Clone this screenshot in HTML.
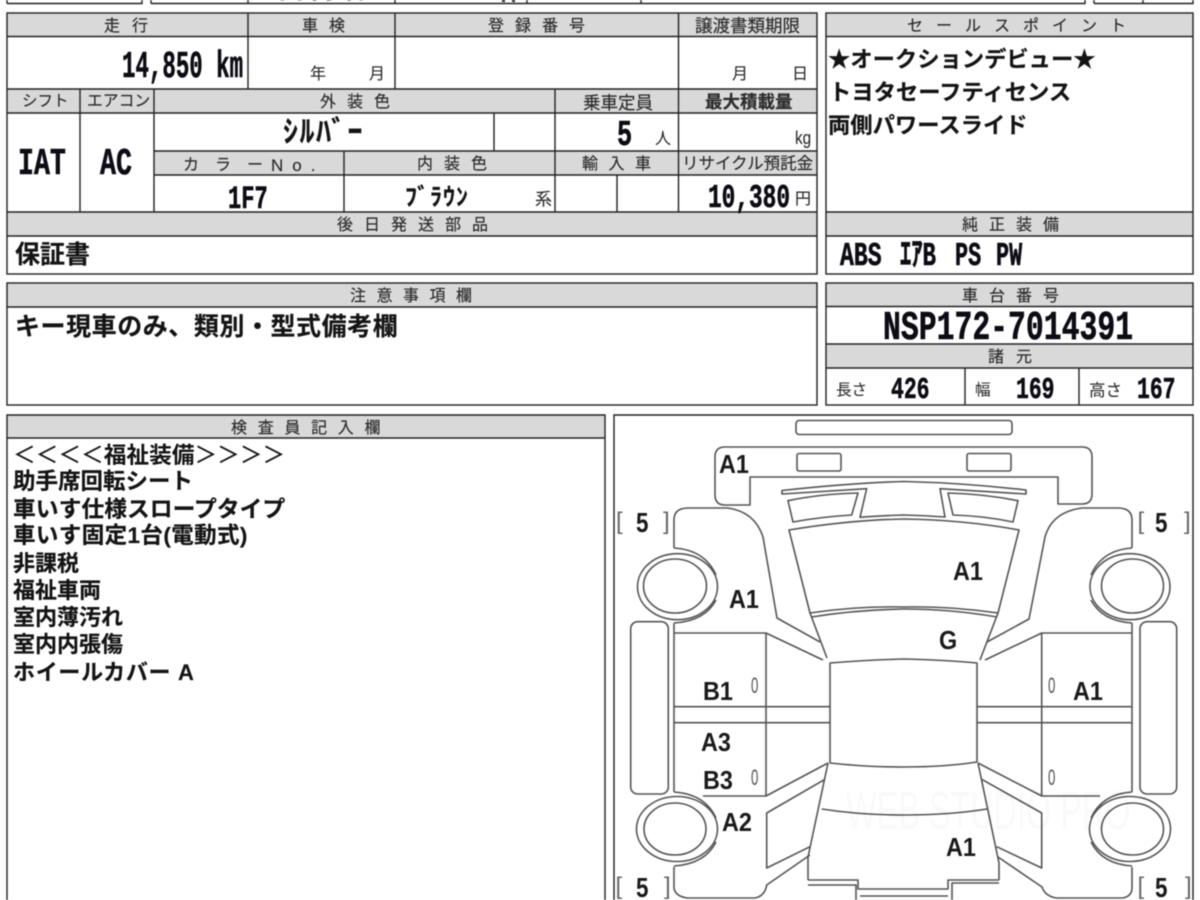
<!DOCTYPE html>
<html lang="ja">
<head>
<meta charset="utf-8">
<title>車両情報</title>
<style>
html,body{margin:0;padding:0;background:#fff;}
#p{position:relative;width:1200px;height:900px;overflow:hidden;background:#fff;filter:blur(.4px);}
svg{position:absolute;left:0;top:0;}
.t{position:absolute;line-height:1;white-space:nowrap;transform-origin:0 0;color:#111;font-family:"Liberation Sans","Noto Sans CJK JP",sans-serif;}
.h{font-size:16px;color:#2c2c2c;margin-top:2px;-webkit-text-stroke:.15px #2c2c2c;}
.s{font-size:16px;color:#2c2c2c;-webkit-text-stroke:.1px #2c2c2c;}
.m{font-family:"Liberation Mono","Noto Sans CJK JP",monospace;font-weight:700;color:#0c0c14;-webkit-text-stroke:.6px #0c0c14;}
.b{font-weight:700;color:#141414;-webkit-text-stroke:.2px #141414;}
.l{font-weight:700;font-size:26px;transform:scaleX(.9);color:#1a1a1a;}
.z{font-size:22px;transform:scaleX(.6);color:#555;}
.k{font-size:24px;color:#666;}
.f{font-weight:700;font-size:28px;transform:scaleX(.8);color:#1a1a1a;}
</style>
</head>
<body>
<div id="p">
<svg width="1200" height="900" viewBox="0 0 1200 900">
  <g fill="#d9d9d9">
    <rect x="7" y="13" width="810" height="24"/>
    <rect x="7" y="89" width="810" height="24"/>
    <rect x="154" y="151" width="663" height="24"/>
    <rect x="7" y="212" width="810" height="24"/>
    <rect x="826" y="13" width="367" height="24"/>
    <rect x="826" y="212" width="367" height="24"/>
    <rect x="7" y="283" width="810" height="24"/>
    <rect x="826" y="283" width="367" height="24"/>
    <rect x="826" y="344" width="367" height="24"/>
    <rect x="7" y="415" width="598" height="23"/>
  </g>
  <g fill="none" stroke="#222" stroke-width="1.4">
    <path d="M7 3.500H142V-2M7 3.500V-2M151 3.500H1085V-2M151 3.500V-2M248 3.500V-2M395 3.500V-2M527 3.500V-2M641 3.500V-2M1094 3.500H1193V-2M1094 3.500V-2M1143 3.500V-2"/>
    <rect x="7" y="13" width="810" height="261"/>
    <path d="M7 36.500H817M7 89H817M7 113H817M154 151H817M154 175H817M7 212H817M7 236H817"/>
    <path d="M248 13V89M395 13V89M678.500 13V212M80 89V212M154 89V212M555 89V212M494 113V151M344 151V212M617 175V212"/>
    <rect x="826" y="13" width="367" height="261"/>
    <path d="M826 36.500H1193M826 212H1193M826 236H1193"/>
    <rect x="7" y="283" width="810" height="122"/>
    <path d="M7 307H817"/>
    <rect x="826" y="283" width="367" height="122"/>
    <path d="M826 306.500H1193M826 344H1193M826 368H1193M965 368V405M1079 368V405"/>
    <path d="M7 905V415H605V905M7 438H605"/>
    <path d="M614 905V415H1193V905"/>
  </g>
  <path d="M502 0h3v2h-3zM512 0h3v2h-3z" fill="#222"/>
  <g fill="none" stroke="#555" stroke-width="1.600" stroke-linejoin="round">
    <rect x="796" y="420.500" width="216" height="14" rx="3"/>
    <path d="M725 447H1082Q1092 447 1092 457V494Q1092 504 1082 504H1058V477H750V505H725Q715 505 715 495V457Q715 447 725 447Z"/>
    <rect x="797" y="453.500" width="44" height="17.500" rx="2"/>
    <rect x="967" y="453.500" width="44" height="17.500" rx="2"/>
    <path d="M782 490.500Q850 483 904 481.500Q965 483 1026 490V494L940 488.700L945 517Q925 515.500 904 515Q885 515.500 860 517.300L866.700 488.700L782 494Z"/>
    <path d="M788 500.700Q820 494 858 493L851.700 515Q820 517 793 522Z"/>
    <path d="M948 493Q985 494 1018 500.700L1013 522Q985 516 953 515Z"/>
    <path d="M789 530Q850 520 904 519Q965 520 1019 530L998 613Q950 606 904 607Q855 606 810 613Z"/>
    <path d="M811.700 617Q855 610 904 609Q950 609 997 617"/>
    <path d="M810 613L827 658M998 613L980 660"/>
    <path d="M830 663Q865 660 904 659Q945 660 977 663V762Q945 767 904 767Q865 767 830 763Z"/>
    <path d="M674 706.700H830M674 722.700H830M977 706.700H1132M977 722.700H1132"/>
    <path d="M766 633V796M1041.700 633V796"/>
    <path d="M674 623V792"/>
    <path d="M1132 623V792"/>
    <path d="M674 633H766L823 660M1132 633H1041.700L985 660"/>
    <path d="M703 796H766L828 763M1100 796H1041.700L978 763"/>
    <path d="M674 548V520Q674 508 688 508H728Q755 512 763 537L777 618L820 642"/>
    <path d="M1132 548V520Q1132 508 1118 508H1082Q1052 512 1045 537L1029 619L987 642"/>
    <path d="M674 548Q705 550 716 575M674 623Q705 621 716 600"/>
    <path d="M1132 548Q1102 550 1091 575M1132 623Q1102 621 1091 600"/>
    <ellipse cx="677.500" cy="586.700" rx="40" ry="33"/>
    <ellipse cx="675" cy="586" rx="31.500" ry="27"/>
    <ellipse cx="1130" cy="586.700" rx="40" ry="33"/>
    <ellipse cx="1132.500" cy="586" rx="31" ry="27"/>
    <path d="M674 792Q705 794 716 818M674 866Q705 864 716 842"/>
    <path d="M1132 792Q1102 794 1091 818M1132 866Q1102 864 1091 842"/>
    <ellipse cx="677" cy="829" rx="40.500" ry="32.500"/>
    <ellipse cx="675" cy="829" rx="31" ry="26"/>
    <ellipse cx="1130" cy="829" rx="40.500" ry="32.500"/>
    <ellipse cx="1132.500" cy="829" rx="31" ry="26"/>
    <rect x="630.700" y="621.700" width="37.600" height="172.300" rx="7"/>
    <rect x="1140" y="621.700" width="36.700" height="172.300" rx="7"/>
    <path d="M825 779.300L766.700 813V868L810 846.700"/>
    <path d="M981.700 779.300L1041.700 813V868L996.700 846.700"/>
    <path d="M828 763L808 857V880M978 763L999 863V880"/>
    <path d="M821.700 809Q860 815 904 815Q950 815 987 809"/>
    <path d="M810 855L766.700 885Q765 896 755 898H687Q675 896 674 888V866.700"/>
    <path d="M998 857L1042 887Q1045 896 1056 898H1123Q1132 896 1132 888V867"/>
    <path d="M808 880H858V889H948V880H999"/>
    <path d="M808 885H856V905M860 896H948M952 905V883H999"/>
  </g>
</svg>

<div class="t b" style="left:279px;top:-21px;font-size:24px;letter-spacing:8px;">国内物</div>

<div class="t h" style="left:104px;top:17px;letter-spacing:12px;">走行</div>
<div class="t h" style="left:302px;top:17px;letter-spacing:11px;">車検</div>
<div class="t h" style="left:488px;top:17px;letter-spacing:11px;">登録番号</div>
<div class="t h" style="left:695px;top:16px;font-size:17.500px;">譲渡書類期限</div>
<div class="t m" style="left:122px;top:49px;font-size:38px;transform:scaleX(.59);">14,850 km</div>
<div class="t s" style="left:310px;top:67px;">年</div>
<div class="t s" style="left:369px;top:67px;">月</div>
<div class="t s" style="left:732px;top:67px;">月</div>
<div class="t s" style="left:792px;top:67px;">日</div>

<div class="t h" style="left:22px;top:92px;font-size:15.500px;">シフト</div>
<div class="t h" style="left:87px;top:92px;font-size:15.800px;">エアコン</div>
<div class="t h" style="left:320px;top:93px;letter-spacing:11px;">外装色</div>
<div class="t h" style="left:583px;top:93px;font-size:17.500px;">乗車定員</div>
<div class="t h" style="left:705px;top:92px;font-size:17.500px;font-weight:700;">最大積載量</div>

<div class="t m" style="left:18px;top:146px;font-size:38px;transform:scaleX(.7);">IAT</div>
<div class="t m" style="left:100px;top:146px;font-size:38px;transform:scaleX(.7);">AC</div>
<div class="t b" style="left:283px;top:118px;font-size:30px;letter-spacing:1.500px;">ｼﾙﾊﾞｰ</div>
<div class="t m" style="left:617px;top:118px;font-size:36px;transform:scaleX(.7);">5</div>
<div class="t s" style="left:655px;top:132px;">人</div>
<div class="t s" style="left:795px;top:129px;font-size:18px;transform:scaleX(.85);">kg</div>

<div class="t h" style="left:183px;top:156px;letter-spacing:16px;">カラー</div>
<div class="t h" style="left:271px;top:155px;font-size:17px;letter-spacing:9px;">No.</div>
<div class="t h" style="left:417px;top:155px;letter-spacing:11px;">内装色</div>
<div class="t h" style="left:582px;top:155px;letter-spacing:10.500px;">輸入車</div>
<div class="t h" style="left:682px;top:154px;font-size:16.500px;">リサイクル預託金</div>

<div class="t m" style="left:228px;top:183.500px;font-size:32px;transform:scaleX(.69);">1F7</div>
<div class="t b" style="left:405px;top:186px;font-size:24px;letter-spacing:1px;">ﾌﾞﾗｳﾝ</div>
<div class="t s" style="left:535px;top:191px;font-size:17px;">系</div>
<div class="t m" style="left:708px;top:181.500px;font-size:33px;transform:scaleX(.69);">10,380</div>
<div class="t s" style="left:795px;top:192px;">円</div>

<div class="t h" style="left:337px;top:216px;letter-spacing:11px;">後日発送部品</div>
<div class="t b" style="left:15px;top:243px;font-size:25px;">保証書</div>

<div class="t h" style="left:907px;top:17px;letter-spacing:13px;">セールスポイント</div>
<div class="t b" style="left:828px;top:49px;font-size:22.300px;">★オークションデビュー★</div>
<div class="t b" style="left:829px;top:82px;font-size:22.300px;">トヨタセーフティセンス</div>
<div class="t b" style="left:828px;top:115px;font-size:22.300px;">両側パワースライド</div>
<div class="t h" style="left:962px;top:216px;letter-spacing:11px;">純正装備</div>
<div class="t m" style="left:840px;top:239.500px;font-size:33px;transform:scaleX(.7);">ABS</div>
<div class="t m" style="left:900px;top:239.500px;font-size:33px;transform:scaleX(.68);">ｴｱB</div>
<div class="t m" style="left:955px;top:239.500px;font-size:33px;transform:scaleX(.66);">PS</div>
<div class="t m" style="left:996px;top:239.500px;font-size:33px;transform:scaleX(.66);">PW</div>

<div class="t h" style="left:350px;top:287px;letter-spacing:10.500px;">注意事項欄</div>
<div class="t b" style="left:15px;top:315px;font-size:25px;letter-spacing:.55px;">キー現車のみ、類別・型式備考欄</div>

<div class="t h" style="left:962px;top:287px;letter-spacing:11px;">車台番号</div>
<div class="t m" style="left:883px;top:308.700px;font-size:41px;transform:scaleX(.726);">NSP172-7014391</div>
<div class="t h" style="left:988px;top:348px;letter-spacing:12px;">諸元</div>
<div class="t s" style="left:836px;top:383px;font-size:15.500px;">長さ</div>
<div class="t m" style="left:891px;top:374.700px;font-size:31px;transform:scaleX(.69);">426</div>
<div class="t s" style="left:975px;top:383px;font-size:15.500px;">幅</div>
<div class="t m" style="left:1016px;top:374.700px;font-size:31px;transform:scaleX(.69);">169</div>
<div class="t s" style="left:1089px;top:383px;font-size:16.500px;">高さ</div>
<div class="t m" style="left:1137px;top:374.700px;font-size:31px;transform:scaleX(.69);">167</div>

<div class="t h" style="left:231px;top:419px;letter-spacing:10.700px;">検査員記入欄</div>
<div class="t" style="left:13px;top:444px;font-size:22.700px;font-weight:500;color:#141414;">＜＜＜＜<b>福祉装備</b>＞＞＞＞</div>
<div class="t b" style="left:13px;top:470.500px;font-size:22.500px;">助手席回転シート</div>
<div class="t b" style="left:13px;top:498px;font-size:22.800px;">車いす仕様スロープタイプ</div>
<div class="t b" style="left:13px;top:525px;font-size:22.500px;letter-spacing:.4px;">車いす固定1台(電動式)</div>
<div class="t b" style="left:13px;top:552.500px;font-size:22px;">非課税</div>
<div class="t b" style="left:13px;top:580px;font-size:22px;">福祉車両</div>
<div class="t b" style="left:13px;top:607px;font-size:22px;">室内薄汚れ</div>
<div class="t b" style="left:13px;top:634px;font-size:22px;">室内内張傷</div>
<div class="t b" style="left:13px;top:661.500px;font-size:22px;letter-spacing:.7px;">ホイールカバー A</div>

<div class="t" style="left:846px;top:784px;font-size:54px;color:rgba(0,0,0,.025);transform:scaleX(.6);">WEB STUDIO PRO</div>

<div class="t l" style="left:719px;top:451px;">A1</div>
<div class="t l" style="left:729px;top:586px;">A1</div>
<div class="t l" style="left:953px;top:558px;">A1</div>
<div class="t l" style="left:939px;top:627px;">G</div>
<div class="t l" style="left:703px;top:678px;">B1</div>
<div class="t l" style="left:700.500px;top:729px;">A3</div>
<div class="t l" style="left:703px;top:767px;">B3</div>
<div class="t l" style="left:721.500px;top:809px;">A2</div>
<div class="t l" style="left:945.500px;top:834px;">A1</div>
<div class="t l" style="left:1073px;top:678px;">A1</div>
<div class="t z" style="left:751px;top:675px;">0</div>
<div class="t z" style="left:751px;top:767px;">0</div>
<div class="t z" style="left:1048px;top:675px;">0</div>
<div class="t z" style="left:1048px;top:767px;">0</div>

<div class="t k" style="left:616px;top:509.500px;">[</div>
<div class="t f" style="left:636px;top:509px;">5</div>
<div class="t k" style="left:663px;top:509.500px;">]</div>
<div class="t k" style="left:1137.500px;top:509.500px;">[</div>
<div class="t f" style="left:1155px;top:509px;">5</div>
<div class="t k" style="left:1184px;top:509.500px;">]</div>
<div class="t k" style="left:615.500px;top:874.500px;">[</div>
<div class="t f" style="left:636px;top:874px;">5</div>
<div class="t k" style="left:664px;top:874.500px;">]</div>
<div class="t k" style="left:1137.500px;top:874.500px;">[</div>
<div class="t f" style="left:1155px;top:874px;">5</div>
<div class="t k" style="left:1185px;top:874.500px;">]</div>
</div>
</body>
</html>
